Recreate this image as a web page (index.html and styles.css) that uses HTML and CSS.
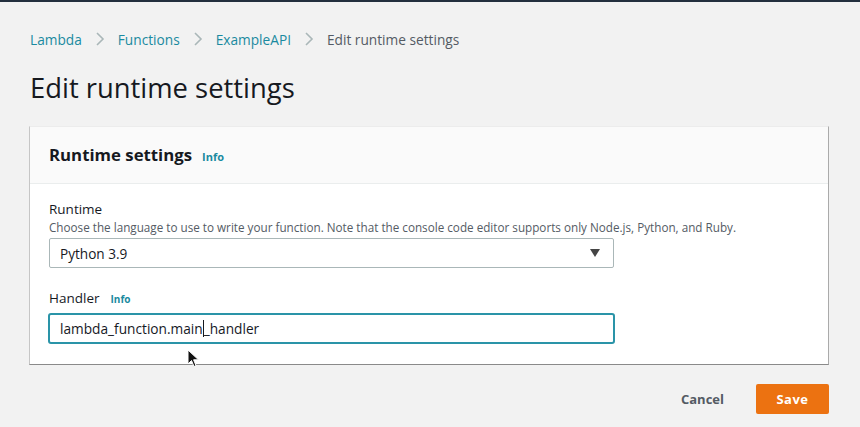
FILE: index.html
```html
<!DOCTYPE html>
<html lang="en">
<head>
<meta charset="utf-8">
<title>Edit runtime settings</title>
<link rel="stylesheet" href="styles.css">
</head>
<body>
<div class="topbar"></div>
<main class="page">
  <nav class="crumbs">
    <a class="crumb-link">Lambda</a>
    <svg class="sep" viewBox="0 0 10 16" width="10" height="16"><path d="M2 2 L8 8 L2 14" fill="none" stroke="#aab7b8" stroke-width="1.6"/></svg>
    <a class="crumb-link">Functions</a>
    <svg class="sep" viewBox="0 0 10 16" width="10" height="16"><path d="M2 2 L8 8 L2 14" fill="none" stroke="#aab7b8" stroke-width="1.6"/></svg>
    <a class="crumb-link">ExampleAPI</a>
    <svg class="sep" viewBox="0 0 10 16" width="10" height="16"><path d="M2 2 L8 8 L2 14" fill="none" stroke="#aab7b8" stroke-width="1.6"/></svg>
    <span class="crumb-current">Edit runtime settings</span>
  </nav>
  <h1 class="title">Edit runtime settings</h1>
  <section class="card">
    <header class="card-head">
      <h2 class="card-title">Runtime settings</h2>
      <a class="info">Info</a>
    </header>
    <div class="card-body">
      <div class="field">
        <div class="label">Runtime</div>
        <div class="desc">Choose the language to use to write your function. Note that the console code editor supports only Node.js, Python, and Ruby.</div>
        <div class="select">
          <span>Python 3.9</span>
          <svg class="caret-down" viewBox="0 0 12 10" width="12" height="10"><path d="M1 1 H11 L6 9 Z" fill="#444"/></svg>
        </div>
      </div>
      <div class="field field-handler">
        <div class="label-row"><span class="label">Handler</span><a class="info info-small">Info</a></div>
        <div class="input"><span>lambda_function.main</span><span class="text-caret"></span><span>_handler</span></div>
      </div>
    </div>
  </section>
  <div class="actions">
    <button class="btn-link">Cancel</button>
    <button class="btn-primary">Save</button>
  </div>
</main>
<svg class="mouse" viewBox="0 0 14 20" width="14" height="20"><path d="M1 1 L1 15 L4.5 11.5 L7 17.5 L9 16.6 L6.6 10.8 L11.5 10.8 Z" fill="#111" stroke="#fff" stroke-width="1"/></svg>
</body>
</html>
```
FILE: styles.css
```css
* { box-sizing: border-box; }
html, body { margin: 0; }
body {
  background: #f2f2f2;
  font-family: "Open Sans", "Noto Sans", sans-serif;
  color: #16191f;
  width: 860px;
  height: 427px;
  overflow: hidden;
  position: relative;
}
.topbar { height: 2px; background: #232f3e; }
.page { padding: 0 31px 0 29px; }
.crumbs {
  display: flex;
  align-items: center;
  height: 18px;
  margin-top: 28px;
  padding-left: 1px;
  font-size: 13.7px;
}
.crumb-link { color: #1a8aa0; }
.sep { margin: 0 13px 0 13px; }
.crumb-current { color: #545b64; }
.title {
  margin: 20px 0 0 1px;
  font-size: 27.4px;
  font-weight: 400;
  line-height: 40px;
  color: #16191f;
}
.card {
  margin-top: 18px;
  background: #fff;
  border-left: 1px solid #c6c6c6;
  border-right: 1px solid #aaa;
  border-bottom: 1px solid #8a8a8a;
  border-top: 1px solid #ececec;
}
.card-head {
  display: flex;
  align-items: baseline;
  height: 57px;
  padding: 16px 19px 0;
  background: #fafafa;
  border-bottom: 1px solid #eaeded;
}
.card-title {
  margin: 0;
  font-size: 16.8px;
  font-weight: 700;
  line-height: 24px;
  color: #16191f;
}
.info {
  margin-left: 10px;
  font-size: 11px;
  font-weight: 700;
  color: #1a8aa0;
}
.card-body { padding: 16px 19px 20px; }
.label { font-size: 13.5px; line-height: 18px; color: #16191f; }
.desc { font-size: 11.7px; line-height: 16px; color: #545b64; margin-top: 1px; }
.select {
  display: flex;
  align-items: center;
  justify-content: space-between;
  width: 565px;
  height: 30px;
  margin-top: 3px;
  padding: 0 12px 0 10px;
  border: 1px solid #aab7b8;
  border-radius: 2px;
  font-size: 13.6px;
  color: #16191f;
}
.field-handler { margin-top: 21px; }
.label-row { display: flex; align-items: baseline; }
.info-small { margin-left: 11px; font-size: 10px; }
.input {
  display: flex;
  align-items: center;
  width: 567px;
  height: 31px;
  margin: 6px 0 0 -1px;
  padding: 0 10px;
  border: 2px solid #2a94a8;
  border-radius: 3px;
  font-size: 13.7px;
  color: #16191f;
}
.text-caret {
  display: inline-block;
  width: 1px;
  height: 17px;
  background: #16191f;
}
.actions {
  display: flex;
  justify-content: flex-end;
  align-items: center;
  gap: 32px;
  margin-top: 19px;
}
button { font-family: inherit; border: none; cursor: pointer; }
.btn-link {
  background: none;
  font-size: 13px;
  font-weight: 700;
  color: #545b64;
  padding: 0;
}
.btn-primary {
  width: 73px;
  height: 30px;
  background: #ec7211;
  color: #fff;
  font-size: 13px;
  font-weight: 700;
  border-radius: 2px;
  letter-spacing: 0.5px;
}
.mouse { position: absolute; left: 187px; top: 349px; }
```
